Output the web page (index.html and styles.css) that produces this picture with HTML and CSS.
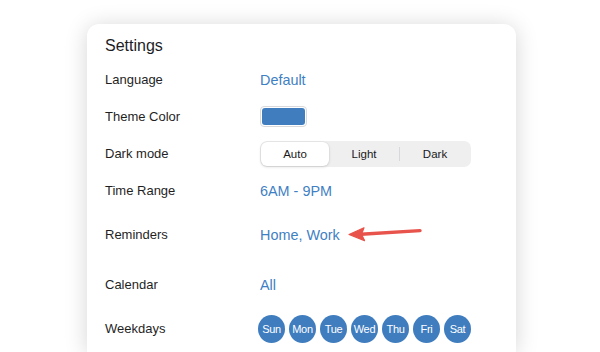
FILE: index.html
```html
<!DOCTYPE html>
<html>
<head>
<meta charset="utf-8">
<link rel="stylesheet" href="styles.css">
</head>
<body>
<div class="card">
  <div class="title">Settings</div>
  <div class="row">
    <div class="label">Language</div>
    <div class="value link">Default</div>
  </div>
  <div class="row">
    <div class="label">Theme Color</div>
    <div class="value"><div class="swatch"><div class="swatch-fill"></div></div></div>
  </div>
  <div class="row">
    <div class="label">Dark mode</div>
    <div class="value">
      <div class="segmented">
        <div class="seg active">Auto</div>
        <div class="seg">Light</div>
        <div class="sep"></div>
        <div class="seg">Dark</div>
      </div>
    </div>
  </div>
  <div class="row">
    <div class="label">Time Range</div>
    <div class="value link">6AM - 9PM</div>
  </div>
  <div class="row row-reminders">
    <div class="label">Reminders</div>
    <div class="value link reminders">Home, Work
      <svg class="arrow" width="78" height="20" viewBox="0 0 78 20">
        <path d="M14 11.2 L73 7.6" stroke="#e8534b" stroke-width="3.4" stroke-linecap="round" fill="none"/>
        <path d="M2 11.5 L17 4.8 L14.5 11.2 L17.5 17.6 Z" fill="#e8534b" stroke="#e8534b" stroke-width="1.2" stroke-linejoin="round"/>
      </svg>
    </div>
  </div>
  <div class="row row-calendar">
    <div class="label">Calendar</div>
    <div class="value link">All</div>
  </div>
  <div class="row row-weekdays">
    <div class="label">Weekdays</div>
    <div class="value days">
      <span class="day">Sun</span><span class="day">Mon</span><span class="day">Tue</span><span class="day">Wed</span><span class="day">Thu</span><span class="day">Fri</span><span class="day">Sat</span>
    </div>
  </div>
</div>
</body>
</html>
```

FILE: styles.css
```css
html, body {
  margin: 0;
  padding: 0;
  background: #ffffff;
  width: 600px;
  height: 352px;
  overflow: hidden;
  font-family: "Liberation Sans", Arial, sans-serif;
}
.card {
  margin: 24px 0 0 87px;
  width: 393px;
  height: 328px;
  padding: 0 18px;
  background: #fff;
  border-radius: 12px 12px 0 0;
  box-shadow: 0 2px 22px rgba(0, 0, 0, 0.17);
}
.title {
  padding-top: 12px;
  height: 20px;
  line-height: 20px;
  font-size: 16px;
  color: #1d1d1f;
  margin-bottom: 5px;
}
.row {
  display: flex;
  align-items: center;
  height: 37px;
}
.row-reminders { margin-top: 7px; }
.row-calendar { margin-top: 13px; }
.row-weekdays { margin-top: 7px; }
.label {
  width: 155px;
  flex: none;
  font-size: 13px;
  color: #1f1f1f;
}
.value {
  display: flex;
  align-items: center;
}
.link {
  font-size: 14.4px;
  color: #3f7fc4;
}
.swatch {
  width: 43px;
  height: 17px;
  padding: 1px;
  border: 1px solid #d9d9dc;
  border-radius: 4px;
  background: #fff;
}
.swatch-fill {
  width: 100%;
  height: 100%;
  background: #3f7dbf;
  border-radius: 3px;
}
.segmented {
  display: flex;
  align-items: center;
  width: 209px;
  height: 24px;
  padding: 1px;
  background: #efeff0;
  border-radius: 7px;
}
.seg {
  flex: 1;
  height: 24px;
  line-height: 24px;
  text-align: center;
  font-size: 11.5px;
  color: #1a1a1a;
  border-radius: 6px;
}
.seg.active {
  flex: none;
  width: 68px;
  background: #fff;
  box-shadow: 0 1px 3px rgba(0, 0, 0, 0.14), 0 0 0 0.5px rgba(0, 0, 0, 0.05);
}
.sep {
  width: 1px;
  height: 14px;
  background: #d8d8da;
}
.arrow {
  margin-left: 7px;
  margin-top: -3px;
}
.days {
  gap: 4px;
  margin-left: -2px;
}
.day {
  width: 27px;
  height: 28px;
  border-radius: 50%;
  background: #3f7dbf;
  color: #fff;
  font-size: 11px;
  letter-spacing: -0.3px;
  display: flex;
  align-items: center;
  justify-content: center;
}
```
